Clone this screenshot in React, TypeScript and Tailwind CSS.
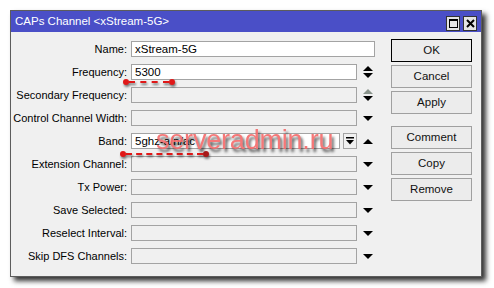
import type React from "react";

type Row = {
  label: string;
  value?: string;
  kind: "plain" | "updown" | "updownDim" | "down" | "up" | "band";
  active?: boolean;
};

const rows: Row[] = [
  { label: "Name:", value: "xStream-5G", kind: "plain", active: true },
  { label: "Frequency:", value: "5300", kind: "updown", active: true },
  { label: "Secondary Frequency:", kind: "updownDim" },
  { label: "Control Channel Width:", kind: "down" },
  { label: "Band:", value: "5ghz-a/n/ac", kind: "band", active: true },
  { label: "Extension Channel:", kind: "down" },
  { label: "Tx Power:", kind: "down" },
  { label: "Save Selected:", kind: "down" },
  { label: "Reselect Interval:", kind: "down" },
  { label: "Skip DFS Channels:", kind: "down" },
];

const Tri: React.FC<{ dir: "up" | "down"; color?: string }> = ({ dir, color = "#000" }) => (
  <svg width="10" height="5" viewBox="0 0 10 5">
    {dir === "up" ? (
      <polygon points="0,5 10,5 5,0" fill={color} />
    ) : (
      <polygon points="0,0 10,0 5,5" fill={color} />
    )}
  </svg>
);

const Spin: React.FC<{ kind: Row["kind"] }> = ({ kind }) => {
  if (kind === "updown" || kind === "updownDim")
    return (
      <div className="flex flex-col items-center gap-[2px]">
        <Tri dir="up" color={kind === "updownDim" ? "#8a948c" : "#000"} />
        <Tri dir="down" />
      </div>
    );
  if (kind === "up" || kind === "band") return <Tri dir="up" />;
  if (kind === "down") return <Tri dir="down" />;
  return null;
};

const Field: React.FC<{ row: Row }> = ({ row }) => {
  const bg = row.active ? "bg-white" : "bg-[#f0f0f0]";
  if (row.kind === "plain")
    return (
      <div className={`w-[244px] h-[16px] border border-[#a3a3a3] ${bg} pl-[3px] text-[11.5px] leading-[14px]`}>
        {row.value}
      </div>
    );
  return (
    <div className="flex items-center">
      {row.kind === "band" ? (
        <div className="flex items-center gap-[3px]">
          <div className={`w-[209px] h-[16px] border border-[#a3a3a3] ${bg} pl-[3px] text-[11.5px] leading-[14px]`}>
            {row.value}
          </div>
          <div className="w-[14px] h-[16px] border border-[#a3a3a3] bg-[#f0f0f0] flex items-center justify-center">
            <svg width="8" height="8" viewBox="0 0 8 8">
              <rect x="0" y="0" width="8" height="1.5" fill="#000" />
              <polygon points="0,3 8,3 4,7.5" fill="#000" />
            </svg>
          </div>
        </div>
      ) : (
        <div className={`w-[226px] h-[16px] border border-[#a3a3a3] ${bg} pl-[3px] text-[11.5px] leading-[14px]`}>
          {row.value}
        </div>
      )}
      <div className="w-[10px] ml-[6px] flex justify-center">
        <Spin kind={row.kind} />
      </div>
    </div>
  );
};

const Btn: React.FC<{ label: string; primary?: boolean }> = ({ label, primary }) => (
  <div
    className={`w-[81px] h-[23px] flex items-center justify-center text-[11.5px] text-[#111] bg-[#ececec] border ${
      primary ? "border-black" : "border-[#a0a0a0]"
    }`}
  >
    {label}
  </div>
);

const App: React.FC = () => {
  return (
    <div className="w-[494px] h-[288px] bg-white pl-[10px] pt-[10px] relative overflow-hidden font-['Liberation_Sans',Arial,sans-serif]">
      <div className="w-[472px] h-[267px] border border-[#5c5c5c] bg-[#f0f0f0] shadow-[4px_4px_5px_rgba(0,0,0,0.8)] flex flex-col">
        {/* Title bar */}
        <div className="h-[21px] bg-[#4a4fc7] flex items-center justify-between pl-[4px] pr-[4px]">
          <span className="text-white text-[11.5px] mt-[1px] whitespace-nowrap">CAPs Channel &lt;xStream-5G&gt;</span>
          <div className="flex items-center gap-[3px] mt-[4px]">
            <div className="w-[14px] h-[15px] bg-[#e4e4e4] border border-[#333] flex items-center justify-center">
              <div className="w-[9px] h-[9px] border border-black border-t-2" />
            </div>
            <div className="w-[14px] h-[15px] bg-[#e4e4e4] border border-[#333] flex items-center justify-center">
              <svg width="9" height="9" viewBox="0 0 9 9">
                <path d="M1 1 L8 8 M8 1 L1 8" stroke="#000" strokeWidth="2" />
              </svg>
            </div>
          </div>
        </div>

        {/* Body */}
        <div className="flex flex-1">
          <div className="flex flex-col gap-[7px] pt-[9px]">
            {rows.map((row) => (
              <div key={row.label} className="flex items-center h-[16px]">
                <div className="w-[116px] text-right text-[11px] text-black whitespace-nowrap">{row.label}</div>
                <div className="ml-[4px]">
                  <Field row={row} />
                </div>
              </div>
            ))}
          </div>
          <div className="flex flex-col gap-[3px] pt-[7px] ml-[16px]">
            <Btn label="OK" primary />
            <Btn label="Cancel" />
            <Btn label="Apply" />
            <div className="h-[6px]" />
            <Btn label="Comment" />
            <Btn label="Copy" />
            <Btn label="Remove" />
          </div>
        </div>
      </div>

      {/* Annotations */}
      <div className="absolute left-[123px] top-[79px] w-[52px] h-[6px] flex items-center [filter:drop-shadow(1px_2px_1px_rgba(0,0,0,0.5))]">
        <div className="w-[6px] h-[6px] rounded-full bg-[#e01818]" />
        <div className="flex-1 border-t-2 border-dashed border-[#e01818]" />
        <div className="w-[6px] h-[6px] rounded-full bg-[#e01818]" />
      </div>
      <div className="absolute left-[120px] top-[151px] w-[89px] h-[6px] flex items-center [filter:drop-shadow(1px_2px_1px_rgba(0,0,0,0.5))]">
        <div className="w-[6px] h-[6px] rounded-full bg-[#e01818]" />
        <div className="flex-1 border-t-2 border-dashed border-[#e01818]" />
        <div className="w-[6px] h-[6px] rounded-full bg-[#a81818]" />
      </div>

      {/* Watermark */}
      <div className="absolute left-[156px] top-[124px] text-[27px] leading-[32px] text-[#f46a6a] opacity-90 [text-shadow:2px_3px_3px_rgba(0,0,0,0.75)] tracking-[-0.2px]">
        serveradmin.ru
      </div>
    </div>
  );
};

export default App;
